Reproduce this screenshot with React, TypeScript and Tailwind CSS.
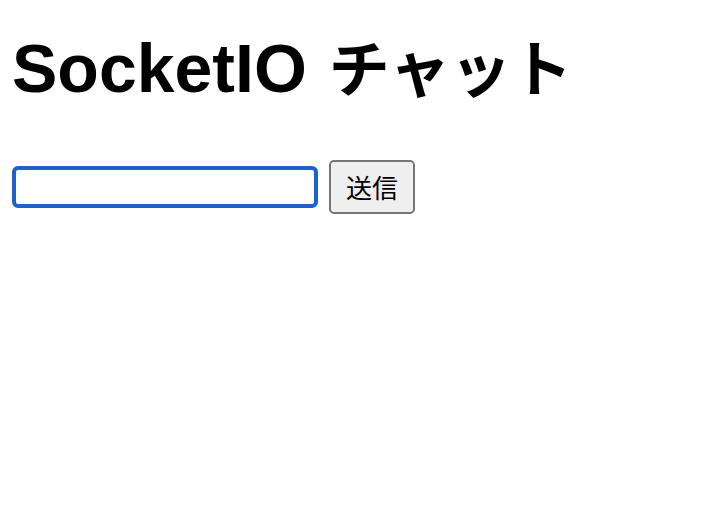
export default function App() {
  return (
    <div className="min-h-screen bg-white px-3 pt-[26px] text-black">
      <h1 className="font-['Liberation_Sans','Noto_Sans_CJK_JP',sans-serif] text-[68px] font-bold leading-[80px]">
        SocketIO
        <span className="ml-[22px] font-['Noto_Sans_CJK_JP',sans-serif] text-[61px] font-bold">チャット</span>
      </h1>
      <form className="mt-[52px] flex items-center gap-[11px]" onSubmit={(e) => e.preventDefault()}>
        <input
          type="text"
          className="h-[42px] w-[306px] rounded-md border-4 border-[#2060c8] bg-white px-2 text-2xl outline-none"
        />
        <button
          type="submit"
          className="h-[54px] w-[86px] rounded-[5px] border-2 border-[#767676] bg-[#efefef] font-['Noto_Sans_CJK_JP',sans-serif] text-[26px] leading-none text-black"
        >
          送信
        </button>
      </form>
    </div>
  )
}
